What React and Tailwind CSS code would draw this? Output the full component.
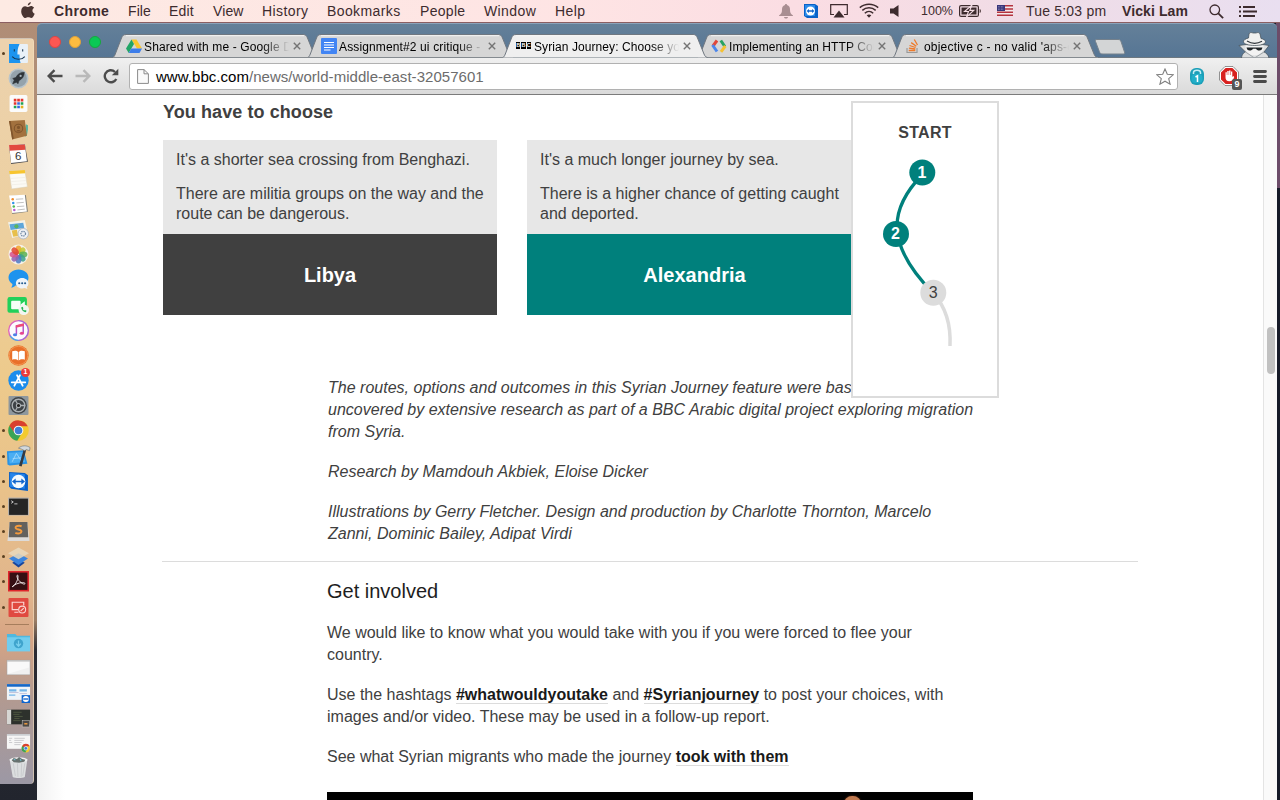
import React from "react";

const dockApps = [
  { name: "finder", run: true, art: (
    <>
      <rect x="1" y="1" width="18" height="18" rx="1" fill="#e9f1f8" />
      <path d="M1 1h10c-2 4-2 7-2 10h2c0 3 0 5 1 8H1z" fill="#1c94ef" />
      <path d="M4 13c3 3.400 9 3.400 12 0M6 6v2M14 6v2" stroke="#17344f" strokeWidth="1" fill="none" />
    </>
  ) },
  { name: "launchpad", art: (
    <>
      <circle cx="10" cy="10" r="9.500" fill="#b9c4ca" />
      <circle cx="10" cy="10" r="8" fill="#95a3ac" />
      <path d="M15.500 4c-4 0-6.500 2-8 5l-3 1 1.500 1.500-1.500 3.500 3.500-1.500L9.500 15l1-3c3-1.500 5-4 5-8z" fill="#2e3439" stroke="#2e3439" strokeWidth=".6" />
      <circle cx="12" cy="7.500" r="1.100" fill="#a8b4bb" />
    </>
  ) },
  { name: "grid", art: (
    <>
      <rect x="1.500" y="2" width="17" height="16" rx="1.500" fill="#fbfbfb" />
      <path d="M5.500 5.500h2.500v2.500H5.500zM8.800 5.500h2.500v2.500H8.800zM12.100 5.500h2.500v2.500h-2.500zM5.500 8.800h2.500v2.500H5.500z" fill="#e5352b" />
      <path d="M8.800 8.800h2.500v2.500H8.800zM8.800 12.100h2.500v2.500H8.800z" fill="#3468e0" />
      <path d="M12.100 8.800h2.500v2.500h-2.500zM5.500 12.100h2.500v2.500H5.500z" fill="#20a353" />
      <path d="M12.100 12.100h2.500v2.500h-2.500z" fill="#e4b020" />
    </>
  ) },
  { name: "contacts", art: (
    <>
      <path d="M17 5l2 1v4l-1 6-2 1z" fill="#58b5a1" />
      <path d="M1 2l15-1 2 15-14 3.500z" fill="#a2713e" />
      <path d="M1 2l1.500-.1 3 17-1.500.6z" fill="#80552c" />
      <circle cx="10" cy="9" r="4" fill="none" stroke="#80552c" />
      <path d="M8.500 8a1.500 1.500 0 003 0 1.500 1.500 0 00-3 0M7.500 12c1-2 4-2 5 0" fill="#80552c" />
    </>
  ) },
  { name: "calendar", art: (
    <>
      <path d="M1 2l15-2 3 17-16 2z" fill="#4b4b50" />
      <path d="M1 1l15-.5 2 16-15 1.500z" fill="#fff" />
      <path d="M1 1l15-.5.600 5L1.600 6.500z" fill="#e2493f" />
      <text x="9.800" y="15.300" fontSize="11" textAnchor="middle" fill="#333" className="font-['Liberation_Sans',sans-serif]">6</text>
    </>
  ) },
  { name: "notes", art: (
    <>
      <path d="M1 2l15-1 2.500 16-15 2z" fill="#fbfaf5" stroke="#d8cfb8" strokeWidth=".5" />
      <path d="M1 2l15-1 .5 3L1.500 5z" fill="#f7c52f" />
      <path d="M2.500 9l14-1M3 12l14-1M3.500 15l14-1" stroke="#eeebe2" strokeWidth=".6" />
    </>
  ) },
  { name: "reminders", art: (
    <>
      <path d="M2 2l15-1 2 16-15 2z" fill="#85837d" />
      <path d="M1 1.500l15-.8 2 16-14 1.500z" fill="#fff" />
      <circle cx="4.500" cy="5" r="1.200" fill="#f08b2d" /><circle cx="5" cy="8.500" r="1.200" fill="#2e93ea" />
      <circle cx="5.500" cy="12" r="1.200" fill="#4cba56" /><circle cx="6" cy="15.300" r="1.200" fill="#b45bd0" />
      <path d="M7.500 5l7-.4M8 8.500l7-.5M8.500 12l7-.5M9 15.200l7-.8" stroke="#aaa" strokeWidth=".7" />
    </>
  ) },
  { name: "preview", art: (
    <>
      <path d="M0 3l16-2 3 13-15 4z" fill="#f4f1e6" />
      <path d="M1.500 5l13-1.500 1 5-13 2z" fill="#5ea6da" />
      <path d="M3.500 11l5-.8 1 6-4.500.8z" fill="#e8bf4b" />
      <circle cx="8" cy="7" r="2" fill="#5bb45f" />
      <circle cx="14.500" cy="14" r="5" fill="#eef1f5" stroke="#a3adba" strokeWidth=".7" />
      <circle cx="14.500" cy="14" r="2.200" fill="none" stroke="#6f87a3" strokeWidth="1.200" strokeDasharray="1.200 .7" />
    </>
  ) },
  { name: "photos", art: (
    <>
      <circle cx="10" cy="10" r="9.500" fill="#f5f1e9" />
      <g fillOpacity=".85">
        <ellipse cx="10" cy="5.500" rx="2.800" ry="4" fill="#f3a32a" />
        <ellipse cx="10" cy="5.500" rx="2.800" ry="4" fill="#c5c82f" transform="rotate(45 10 10)" />
        <ellipse cx="10" cy="5.500" rx="2.800" ry="4" fill="#59b055" transform="rotate(90 10 10)" />
        <ellipse cx="10" cy="5.500" rx="2.800" ry="4" fill="#3aa08c" transform="rotate(135 10 10)" />
        <ellipse cx="10" cy="5.500" rx="2.800" ry="4" fill="#4b79c4" transform="rotate(180 10 10)" />
        <ellipse cx="10" cy="5.500" rx="2.800" ry="4" fill="#9160b0" transform="rotate(225 10 10)" />
        <ellipse cx="10" cy="5.500" rx="2.800" ry="4" fill="#d8528b" transform="rotate(270 10 10)" />
        <ellipse cx="10" cy="5.500" rx="2.800" ry="4" fill="#e0452f" transform="rotate(315 10 10)" />
      </g>
    </>
  ) },
  { name: "messages", art: (
    <>
      <path d="M10 .5c5.500 0 9.500 3.500 9.500 7.800S15.500 16 10 16c-1 0-2-.1-3-.4-1 1.400-2.500 2-4 2 .8-1 1.300-2 1.200-3.400C2 12.800.5 10.700.5 8.300.5 4 4.500.5 10 .5z" fill="#1d93ee" />
      <path d="M13.500 8.500c3.400 0 6 2.200 6 5 0 1.500-.6 2.700-1.700 3.600l.7 2-2.600-1c-.8.300-1.600.4-2.400.4-3.400 0-6-2.200-6-5s2.600-5 6-5z" fill="#eef4f8" />
      <circle cx="10.700" cy="13.500" r="1" fill="#275f91" /><circle cx="13.500" cy="13.500" r="1" fill="#275f91" /><circle cx="16.300" cy="13.500" r="1" fill="#275f91" />
    </>
  ) },
  { name: "facetime", art: (
    <>
      <rect x="-.5" y="2" width="18.500" height="15" rx="2" fill="#22d05a" />
      <rect x="3" y="5.500" width="9" height="8" rx="1" fill="#f6fff8" /><path d="M12 9l4-3v7l-4-2.500z" fill="#f6fff8" />
      <circle cx="15" cy="14" r="5" fill="#f1f6f2" />
      <path d="M12.500 12c.5 2.500 2 4 4.500 4.500l.7-1.500-1.600-.8-.8.600-1.200-1.300.6-.9-.8-1.500z" fill="#22b552" />
    </>
  ) },
  { name: "itunes", art: (
    <>
      <circle cx="10" cy="10" r="10" fill="#dd62bd" />
      <path d="M10 0a10 10 0 010 20" fill="#a46bd6" /><path d="M1.300 15A10 10 0 0010 20l0-5z" fill="#4da3e8" />
      <circle cx="10" cy="10" r="8.700" fill="#fcfbfd" />
      <path d="M8 13.500V5.800l6.500-1.500v8" fill="none" stroke="#b552c8" strokeWidth="1.400" />
      <ellipse cx="6.700" cy="14" rx="2" ry="1.500" fill="#4b80e6" /><ellipse cx="13.200" cy="12.600" rx="2" ry="1.500" fill="#e6478f" />
      <path d="M7.400 5l7.800-1.800v2.400L7.400 7.400z" fill="#ee4a78" />
    </>
  ) },
  { name: "ibooks", art: (
    <>
      <circle cx="10" cy="10" r="9.700" fill="#e9702a" />
      <circle cx="10" cy="10" r="8.800" fill="none" stroke="#f5a25e" strokeWidth=".7" />
      <path d="M4 6c2.500-1 4.500-.6 5.700.6v8.200C8.500 13.700 6.500 13.300 4 14zM16 6c-2.500-1-4.500-.6-5.700.6v8.200c1.200-1.100 3.200-1.500 5.700-.8z" fill="#fff" />
    </>
  ) },
  { name: "appstore", badge: "1", art: (
    <>
      <circle cx="10" cy="10" r="9.700" fill="#1b8cec" />
      <path d="M6 15l5.400-10M14 15L8.600 5M3.500 11.700h13" stroke="#fff" strokeWidth="1.600" strokeLinecap="round" />
    </>
  ) },
  { name: "settings", art: (
    <>
      <rect x=".5" y="1" width="19" height="18" rx="1" fill="#8e979d" />
      <circle cx="10" cy="10" r="8" fill="#3e4347" />
      <circle cx="10" cy="10" r="6" fill="none" stroke="#abb0b3" strokeWidth="1.300" />
      <circle cx="10" cy="10" r="2" fill="#222" stroke="#abb0b3" />
      <path d="M12 10h4.500M9 11.700L6.700 15.500M9 8.300L6.700 4.500" stroke="#abb0b3" strokeWidth="1.200" />
    </>
  ) },
  { name: "chrome", run: true, art: (
    <>
      <circle cx="10" cy="10" r="9.800" fill="#f3ca2f" />
      <path d="M1.300 5.500A9.800 9.800 0 0118.800 6H10l-4.500 6.500z" fill="#d9402f" />
      <path d="M1.300 5.500a9.800 9.800 0 007.500 14.200L13.500 12 6 12z" fill="#3aa457" />
      <circle cx="10" cy="10" r="4.600" fill="#f6f6f6" /><circle cx="10" cy="10" r="3.600" fill="#3f7ed6" />
    </>
  ) },
  { name: "xcode", run: true, art: (
    <>
      <path d="M-1 5l16-1 3.500 13-17 1.500-2-1z" fill="#2a93e4" />
      <path d="M.5 6.500l14-.8 2 9.500-15 1.500z" fill="#4aaef3" />
      <path d="M4 15l4-8 4.500 7M4.500 12l8-.8" stroke="#a6dafa" strokeWidth=".8" fill="none" />
      <path d="M17.500 3L13 19.500l-2.500-.7L15 3z" fill="#333a42" />
      <path d="M10 2C13-.8 18-.8 21 1.500L20.500 4.500l-3-1.100-1.500 1.200-3-1.600z" fill="#d3d8dc" stroke="#59616a" strokeWidth=".5" />
    </>
  ) },
  { name: "teamviewer", run: true, art: (
    <>
      <path d="M1 1l15 1 3 2v15l-16-2-2-2z" fill="#0960c8" />
      <path d="M2 2l14 1v14l-14-2z" fill="#2785ea" />
      <circle cx="10" cy="10" r="6.500" fill="#f5fafe" />
      <path d="M3.800 10l3.500-2.800v2h5.400v-2l3.500 2.800-3.500 2.800v-2H7.300v2z" fill="#1266cc" />
    </>
  ) },
  { name: "terminal", run: true, art: (
    <>
      <rect x="0" y="1.500" width="20" height="17" rx="1" fill="#b4b0ab" />
      <rect x="1" y="2.500" width="18" height="15.500" fill="#252525" />
      <path d="M3 4.500l2 1.200L3 7M6 7.500h3" stroke="#ddd" fill="none" strokeWidth=".8" />
    </>
  ) },
  { name: "sublime", run: true, art: (
    <>
      <path d="M1.500 1h17L20.500 19H-.5z" fill="#dddbd9" />
      <path d="M1.500 1h17l.8 14.500H.7z" fill="#63615d" />
      <path d="M13 5C10 4 7 5 7.300 6.600c.5 1.800 5.500 1.300 5.500 3.500 0 1.800-3.300 2.300-5.800 1.200" stroke="#f39a3d" strokeWidth="1.900" fill="none" />
    </>
  ) },
  { name: "layers", run: true, art: (
    <>
      <path d="M4 16l6-3.500 6 3.500-6 4.500z" fill="#19459b" />
      <path d="M1 12L10 7l9 5-9 6z" fill="#3b84dd" />
      <path d="M0 7l10-5.500L20 7l-10 5.500z" fill="#e9d9bd" fillOpacity=".85" />
    </>
  ) },
  { name: "acrobat", run: true, art: (
    <>
      <rect x="0" y="0" width="20" height="19.500" fill="#e0262c" />
      <rect x="1.500" y="1.500" width="17" height="16.500" fill="#351012" />
      <path d="M4 15c2-.5 6-6 5.500-10.500C9.400 3.500 8.300 4 8.500 5c.6 4 5 7.500 7 7.500 1.500-.2.500-1.500-1.500-1.500-3.500 0-8.500 2-10 4z" stroke="#efe8e8" strokeWidth=".9" fill="none" />
    </>
  ) },
  { name: "remote", run: true, art: (
    <>
      <rect x=".5" y="1" width="19" height="18" rx="1" fill="#e04a40" />
      <path d="M10 12H4V5h11v3M6 14.500h4" stroke="#fbd8d4" strokeWidth="1.100" fill="none" />
      <circle cx="13.500" cy="12" r="3.300" stroke="#fbd8d4" fill="#e04a40" /><path d="M12 13.500l3-3" stroke="#fbd8d4" />
    </>
  ) },
];

const dockFiles = [
  { name: "downloads", art: (
    <>
      <path d="M-1 2h8l1.500 1.500H21V18H-1z" fill="#4fb8df" /><path d="M-1 5h22v13.500H-1z" fill="#72cdee" />
      <circle cx="10" cy="11" r="4.500" fill="#3fa4cd" /><path d="M10 8v5M7.800 11l2.200 2.500 2.200-2.500" stroke="#79d0ee" fill="none" strokeWidth="1.200" />
    </>
  ) },
  { name: "blank-window", art: (
    <><rect x="-1" y="3" width="22" height="14" fill="#f0f0f0" stroke="#999" strokeWidth=".4" /><path d="M0 4h20v6L0 16z" fill="#f9f9f9" /><path d="M-1 3.800h22" stroke="#bbb" /></>
  ) },
  { name: "meeting-window", art: (
    <>
      <rect x="-1" y="2" width="22" height="15" fill="#eff4f8" /><path d="M-1 2h22v2.500H-1z" fill="#1467c7" />
      <path d="M1 7h7v2H1zM1 12h6v1H1zM11 7h7v2h-7z" fill="#75b6e8" /><path d="M1 10h9M11 11h7" stroke="#aac" strokeWidth=".6" />
      <rect x="13" y="12.500" width="8" height="7.500" fill="#0d65cf" /><circle cx="17" cy="16.200" r="2.900" fill="#fff" /><path d="M14.500 16.200h5" stroke="#1266cc" strokeWidth="1.300" />
    </>
  ) },
  { name: "editor-window", art: (
    <>
      <rect x="-1" y="2.500" width="22" height="14" fill="#2d312c" /><path d="M-1 2.500h4v14h-4z" fill="#d6d6d3" />
      <path d="M5 5h8M5 7h6M6 9h8M6 11h5M5 13h7" stroke="#5f6b4b" strokeWidth=".6" />
      <rect x="13.500" y="13" width="7" height="6" fill="#4c4946" stroke="#c9c6c2" strokeWidth=".5" /><path d="M15.500 16h3" stroke="#ee9c40" strokeWidth="1.400" />
    </>
  ) },
  { name: "browser-window", art: (
    <>
      <rect x="-1" y="2" width="22" height="14" fill="#f6f6f6" /><path d="M-1 2h22v1.500H-1z" fill="#c8ccd0" />
      <path d="M1 6h3M1 8h2M1 10h3M6 6h10M6 8h9M6 10h7M6 12h6" stroke="#bdbdc2" strokeWidth=".7" />
      <circle cx="17" cy="15.500" r="4" fill="#f3ca2f" /><path d="M13.400 13.500a4 4 0 017.300 0H17l-2 3z" fill="#d9402f" /><path d="M13.400 13.500A4 4 0 0016.500 19.500l2-3.500z" fill="#3aa457" /><circle cx="17" cy="15.500" r="1.700" fill="#3f7ed6" stroke="#fff" strokeWidth=".6" />
    </>
  ) },
  { name: "trash", art: (
    <>
      <path d="M1.500 2h17l-2.500 17c-2.500 1.300-9 1.300-11.500 0z" fill="#dcdedf" />
      <path d="M5 6l2 12M9 6l.5 13M13 6l-.5 13M16 6l-2 12" stroke="#c3c6c8" strokeWidth=".7" />
      <ellipse cx="10" cy="2.800" rx="8.500" ry="2.600" fill="#f0f1f2" /><path d="M3.500 3l2-2 3 1 2-2 3 2 3 .5-1 2-5 1-5-.5z" fill="#68726f" />
      <path d="M5.500 2L7 3M11.500 2l1 1.500" stroke="#6fc1d4" />
    </>
  ) },
];

function DockItem({ item }) {
  return (
    <div className="flex h-[25.170px] w-[37px] shrink-0 items-center">
      <span className={"ml-[2px] h-[3px] w-[3px] rounded-full " + (item.run ? "bg-[#5a4021]" : "bg-transparent")} />
      <div className="relative ml-[3px] h-[21px] w-[21px]">
        <svg viewBox="0 0 20 20" className="h-[21px] w-[21px] overflow-visible">{item.art}</svg>
        {item.badge && (
          <span className="absolute -top-[2px] left-[13px] flex h-[9px] w-[9px] items-center justify-center rounded-full bg-[#ee3b3a] text-[7px] font-bold text-white">{item.badge}</span>
        )}
      </div>
    </div>
  );
}

function Dock() {
  return (
    <div className="flex w-[37px] shrink-0 flex-col pt-[15px]">
      <div className="flex h-[746px] w-[34px] flex-col rounded-r-[4px] border-t border-r border-[#f3dfc0]/60 bg-[linear-gradient(#ecd2ae_0%,#edd0a0_25%,#edca8c_45%,#e9c28a_60%,#e0b48c_75%,#d8a584_80%,#b39a90_88%,#9c98a5_100%)] pt-[2px]">
        {dockApps.map((a) => <DockItem key={a.name} item={a} />)}
        <div className="flex h-[10px] items-center pl-[5px]"><div className="h-px w-[24px] bg-[#a67d5c]" /></div>
        {dockFiles.map((a) => <DockItem key={a.name} item={a} />)}
      </div>
    </div>
  );
}

function MenuBar() {
  return (
    <div className="flex h-[22px] shrink-0 items-center bg-[linear-gradient(90deg,#fdeae3_0%,#fee4e4_45%,#fbdde3_62%,#f0dce6_80%,#e9dff0_100%)] text-[14px] text-[#3d2b2e]">
      <svg viewBox="0 0 14 16" className="ml-[21px] h-[16px] w-[14px] -translate-y-px">
        <path d="M9.800 0c.1 1.800-1.300 3.400-3 3.400C6.600 1.700 8.200.2 9.800 0zM10 4c.9 0 2.300.5 3.100 1.700-2.500 1.600-2 5 .6 6C12.900 13.800 11.600 16 10.200 16c-1.100 0-1.600-.7-2.900-.7-1.400 0-1.900.7-2.900.7C2.400 16 .2 12.400.2 9.200.2 5.900 2.200 4.200 4.200 4.200c1.200 0 2.300.8 3 .8S8.700 4 10 4z" fill="#4a3532" />
      </svg>
      <span className="ml-[19px] w-[74px] font-bold tracking-[0.4px]">Chrome</span>
      <span className="w-[41px] tracking-[0.1px]">File</span>
      <span className="w-[44px] tracking-[0.2px]">Edit</span>
      <span className="w-[49px] tracking-[0.1px]">View</span>
      <span className="w-[65px] tracking-[0.4px]">History</span>
      <span className="w-[93px] tracking-[0.4px]">Bookmarks</span>
      <span className="w-[64px] tracking-[0.3px]">People</span>
      <span className="w-[71px] tracking-[0.4px]">Window</span>
      <span className="w-[223px] tracking-[0.400px]">Help</span>
      <svg viewBox="0 0 14 15" className="ml-px h-[15px] w-[14px]"><path d="M7 0c.8 0 1 .5 1 1 2.300.5 3 2.500 3 4.500 0 3 .5 4.500 3 6V12H0v-.5c2.500-1.500 3-3 3-6C3 3.500 3.700 1.500 6 1c0-.5.2-1 1-1zM5 13h4c-.3 2-3.700 2-4 0z" fill="#a98e92" /></svg>
      <svg viewBox="0 0 14 16" className="ml-[11px] h-[16px] w-[14px]"><path d="M0 1h11l3 2v12H3l-3-2z" fill="#0a62c8" /><path d="M1 2h10v11H1z" fill="#2c8bea" /><circle cx="6.500" cy="8" r="4.500" fill="#fff" /><path d="M2.500 8L5 6v1.300h3V6l2.500 2L8 10V8.700H5V10z" fill="#1266cc" /></svg>
      <svg viewBox="0 0 18 14" className="ml-[12px] h-[14px] w-[18px]"><path d="M4 10.500H.7V.7h16.600v9.800H14" fill="none" stroke="#3d2b2e" strokeWidth="1.200" /><path d="M9 6.500l5.500 7h-11z" fill="#3d2b2e" /></svg>
      <svg viewBox="0 0 20 15" className="ml-[11px] h-[15px] w-[20px] -translate-y-px"><g fill="none" stroke="#3d2b2e" strokeWidth="1.500"><path d="M.8 4.600c5.300-4.600 13.100-4.600 18.400 0M3.300 7.400c3.900-3.500 9.500-3.500 13.400 0M5.800 10.200c2.400-2.200 6-2.200 8.400 0" /></g><path d="M7.700 12.300c1.300-1.100 3.300-1.100 4.600 0L10 14.800z" fill="#3d2b2e" /></svg>
      <svg viewBox="0 0 9 12" className="ml-[11px] h-[12px] w-[9px]"><path d="M0 3.500h3.500L8.500 0v12l-5-3.500H0z" fill="#3d2b2e" /></svg>
      <span className="ml-[22px] w-[38px] text-[12.500px]">100%</span>
      <svg viewBox="0 0 23 12" className="h-[12px] w-[23px]"><rect x=".6" y=".6" width="18.800" height="10.800" rx="1.500" fill="none" stroke="#3d2b2e" strokeWidth="1.200" /><rect x="2.500" y="2.500" width="15" height="7" fill="#3d2b2e" /><path d="M20.700 4c1.500.4 1.500 3.600 0 4z" fill="#3d2b2e" /><path d="M13 0L5.500 6.500h4L7.500 12l7.300-6.600h-4z" fill="#3d2b2e" stroke="#f3dce4" strokeWidth="1.100" /></svg>
      <svg viewBox="0 0 16 11" className="ml-[15px] h-[11px] w-[16px] -translate-y-px"><path d="M0 0h16v11H0z" fill="#f4e9ec" /><path d="M0 .8h16M0 4h16M0 7.200h16M0 10.300h16" stroke="#b4333e" strokeWidth="1.500" /><path d="M0 0h8v6H0z" fill="#38357a" /><path d="M1 1.500h6M1 3h6M1 4.500h6" stroke="#b9b5d8" strokeWidth=".6" strokeDasharray=".7 .8" /></svg>
      <span className="ml-[13px] w-[96px] whitespace-nowrap tracking-[0.2px]">Tue 5:03 pm</span>
      <span className="w-[87px] whitespace-nowrap font-bold tracking-[0.1px]">Vicki Lam</span>
      <svg viewBox="0 0 15 15" className="h-[15px] w-[15px]"><circle cx="5.800" cy="5.800" r="4.800" fill="none" stroke="#3d2b2e" strokeWidth="1.300" /><path d="M9.300 9.300l4.800 4.800" stroke="#3d2b2e" strokeWidth="1.800" /></svg>
      <svg viewBox="0 0 18 11" className="ml-[15px] h-[11px] w-[18px]"><path d="M0 1h2M0 5.500h2M0 10h2M4 1h12M4 5.500h14M4 10h12" stroke="#3d2b2e" strokeWidth="1.800" /></svg>
    </div>
  );
}

function Tab({ active, icon, title, last, titleClass }) {
  return (
    <div className={"relative flex h-[24px] w-[205px] shrink-0 items-center pl-[13px] " + (last ? "" : "-mr-[10px] ") + (active ? "z-10" : "")}>
      <svg viewBox="0 0 205 24" className="absolute inset-0 h-[24px] w-[205px]">
        <path d="M-.5 23.500C1 23 1.500 22 2.300 20L8.500 4C9.500 1.500 10.500.5 13 .5H190c2.500 0 3.500 1 4.500 3.500L201 20c.8 2 1.500 3 3.500 3.500" fill={active ? "#efefef" : "#d6d6d6"} stroke="#6f7780" strokeWidth="1" />
        {!active && <path d="M0 23.500h205" stroke="#858b90" />}
        <path d="M13 1.700h178" stroke="#f6f6f6" strokeWidth="1" />
      </svg>
      <div className="relative h-[16px] w-[16px] shrink-0">{icon}</div>
      <span className={"relative top-px ml-[2px] w-[145px] overflow-hidden whitespace-nowrap text-[12px] text-black [mask-image:linear-gradient(90deg,#000_118px,transparent_145px)] " + titleClass}>{title}</span>
      <svg viewBox="0 0 8 8" className="relative ml-[4px] h-[8px] w-[8px]"><path d="M.8.8l6.400 6.400M7.200.8L.8 7.200" stroke="#747474" strokeWidth="1.400" /></svg>
    </div>
  );
}

const favs = {
  drive: <svg viewBox="0 0 16 16" className="h-[16px] w-[16px]"><path d="M5.500 1.500h5L16 10.500h-5z" fill="#f9c62f" /><path d="M5.500 1.500L8 6 2.700 15 0 10.500z" fill="#22a565" /><path d="M5.300 10.500H16L13.500 15H2.700z" fill="#3d7dea" /></svg>,
  docs: <svg viewBox="0 0 16 16" className="h-[16px] w-[16px]"><rect width="16" height="16" rx="1" fill="#4285f4" /><path d="M3 4.500h10M3 7h10M3 9.500h10M3 12h6.500" stroke="#fff" strokeWidth="1.100" /></svg>,
  bbc: <div className="mt-[4px] flex h-[7px] w-[15px] gap-px text-[5.500px] leading-[7px] font-bold text-white"><span className="flex w-[4.400px] justify-center bg-black">B</span><span className="flex w-[4.400px] justify-center bg-black">B</span><span className="flex w-[4.400px] justify-center bg-black">C</span></div>,
  dev: <svg viewBox="0 0 16 16" className="h-[16px] w-[16px]" fill="none" strokeWidth="3"><path d="M6 2.500L2 8" stroke="#e0473a" /><path d="M1.500 7l4.500 6.500" stroke="#4a86ec" /><path d="M9.800 2.500L13.800 8.500" stroke="#27a262" /><path d="M14.300 8l-4.300 5.800" stroke="#f5c132" /></svg>,
  so: <svg viewBox="0 0 16 16" className="h-[16px] w-[16px]" fill="none"><path d="M1 10v4.500h10V10" stroke="#9a9a9a" strokeWidth="1.200" /><path d="M2.700 12.500h6.600M2.900 10.200l6.400.8M3.500 7.500l6.100 2M5.200 4.600l5.100 3.700M8.300 1.500l3.200 5.500" stroke="#ee7a2a" strokeWidth="1.300" /></svg>,
};

function TabStrip() {
  return (
    <div className="flex h-[35px] shrink-0 rounded-t-[5px] border-t border-[#8aa3ba] bg-[linear-gradient(#648099,#567594)] pl-[12px] shadow-[inset_0_-1px_0_#6d7881]">
      <div className="flex h-[35px] w-[64px] items-center gap-[8px]">
        <span className="h-[12px] w-[12px] rounded-full border border-[#dc4644] bg-[#fc5753]" />
        <span className="h-[12px] w-[12px] rounded-full border border-[#dfa23a] bg-[#fdbc40]" />
        <span className="h-[12px] w-[12px] rounded-full border border-[#16a83e] bg-[#0ac855]" />
      </div>
      <div className="flex pt-[10px]">
        <Tab icon={favs.drive} title="Shared with me - Google Drive" titleClass="tracking-[0.130px]" />
        <Tab icon={favs.docs} title="Assignment#2 ui critique - Google" titleClass="tracking-[0.130px]" />
        <Tab active icon={favs.bbc} title="Syrian Journey: Choose your own" titleClass="tracking-[0.080px]" />
        <Tab icon={favs.dev} title="Implementing an HTTP Connection" titleClass="tracking-[0.080px]" />
        <Tab last icon={favs.so} title="objective c - no valid 'aps-environment" titleClass="tracking-[0.200px]" />
        <svg viewBox="0 0 32 16" className="-ml-[4px] mt-[5px] h-[16px] w-[32px]"><path d="M3 .5h21c2 0 2.500.6 3.200 2.500L30.500 13c.5 1.500 0 2-1.500 2H9C7 15 6 14.500 5.300 12.500L1.500 2.500C1 1 1.500.5 3 .5z" fill="#d3d5d6" stroke="#75818c" /></svg>
      </div>
      <svg viewBox="0 0 32 26" className="mt-[8px] ml-auto mr-[7px] h-[26px] w-[32px]">
        <path d="M3.500 26C4 22 6 20.500 7.500 20L1 13.500 8 12.500h17l6 1L26 20c2 .8 4.500 3 5 6z" fill="#dddfe0" stroke="#3f4a53" strokeWidth=".7" />
        <path d="M7.500 14h18v3.500c-1 3-5 6-9 6s-8-3-9-6z" fill="#f3f3f3" />
        <path d="M10.500 6L11 2C11.500.3 13.500.3 15 1h3c1.500-.7 3.500-.7 4 1l1 4.500c2.500.6 4.500 1.700 4.500 3.200 0 2.300-5 3.800-10.800 3.800S5.500 12 5.500 9.700c0-1.700 2-3 5-3.700z" fill="#f0f0ef" stroke="#3f4a53" strokeWidth=".7" />
        <path d="M9 9c4.500 2.800 10.500 2.800 15 .3" stroke="#2e3439" strokeWidth="1.100" fill="none" />
        <path d="M8.500 15.500h16l-.7 2c-1.700 1.600-4.800 1.300-5.800-.8h-3c-1 2.100-4.300 2.400-5.800.8z" fill="#1f2427" />
        <path d="M7.500 20l9 6 9.500-6" stroke="#9da3a7" strokeWidth="1" fill="none" />
      </svg>
    </div>
  );
}

function Toolbar() {
  return (
    <div className="flex h-[37px] shrink-0 items-center border-b border-[#7b7b7b] bg-[linear-gradient(#f0f0f0,#dadada)]">
      <svg viewBox="0 0 16 14" className="ml-[10px] h-[14px] w-[16px]" fill="none" stroke="#4c4c4c" strokeWidth="2.400"><path d="M15.500 7H2M7.500 1.200L1.700 7l5.800 5.800" /></svg>
      <svg viewBox="0 0 16 14" className="ml-[12px] h-[14px] w-[16px]" fill="none" stroke="#b9b9b9" strokeWidth="2.400"><path d="M.5 7H14M8.500 1.200L14.300 7l-5.800 5.800" /></svg>
      <svg viewBox="0 0 16 16" className="ml-[12px] h-[16px] w-[16px]"><path d="M13.300 11A6 6 0 112.500 5.300 6 6 0 0112 4" fill="none" stroke="#4c4c4c" strokeWidth="2.400" /><path d="M15.300.8v6.500H8.800z" fill="#4c4c4c" /></svg>
      <div className="ml-[10px] flex h-[27px] w-[1049px] items-center rounded-[3px] border border-[#b1b1b1] bg-white pl-[7px] text-[15px] text-[#6c6c6c]">
        <svg viewBox="0 0 12 15" className="h-[15px] w-[12px]"><path d="M.6.6h6.400l4.400 4.200v9.600H.6z" fill="#fafafa" stroke="#8a8a8a" /><path d="M7 .6v4.200h4.400" fill="none" stroke="#8a8a8a" /></svg>
        <span className="ml-[7px] flex-1 pt-[2px] whitespace-nowrap tracking-[0.040px]"><span className="text-black">www.bbc.com</span>/news/world-middle-east-32057601</span>
        <svg viewBox="0 0 18 17" className="mr-[3px] h-[17px] w-[18px]"><path d="M9 1l2.300 5.300 5.900.5-4.500 3.800 1.400 5.600L9 13.200l-5.100 3 1.400-5.600L.8 6.800l5.900-.5z" fill="#fff" stroke="#808080" strokeWidth="1.100" /></svg>
      </div>
      <svg viewBox="0 0 14 17" className="ml-[12px] h-[17px] w-[14px]"><rect width="14" height="17" rx="6" fill="#1c9fb8" /><path d="M3.500 6V4.500c0-3 7-3 7 0V6" stroke="#c5edf5" strokeWidth="1.500" fill="none" /><rect x="1.500" y="6" width="11" height="9" rx="4" fill="#22afc9" /><path d="M5.500 9l2-1.200V14" stroke="#fff" strokeWidth="1.500" fill="none" /></svg>
      <div className="relative ml-[15px] h-[20px] w-[20px]">
        <svg viewBox="0 0 20 20" className="h-[20px] w-[20px]"><path d="M6 .5h8L19.500 6v8L14 19.500H6L.5 14V6z" fill="#fff" stroke="#777" strokeWidth=".8" /><path d="M6.600 2h6.800L18 6.600v6.800L13.400 18H6.600L2 13.400V6.600z" fill="#d8211f" /><path d="M6.500 9.500V6.200h1.300V9h.5V5h1.400v4h.4V4.500h1.400V9h.5V5.500h1.300V11l1-1 .9.900c-1 3-2.300 4.300-4.700 4.300-2.800 0-4-1.500-4-4z" fill="#fff" /></svg>
        <span className="absolute top-[13px] left-[13px] flex h-[11px] w-[10px] items-center justify-center rounded-[2px] bg-[#555] text-[9px] font-bold text-white">9</span>
      </div>
      <svg viewBox="0 0 14 13" className="ml-[14px] h-[13px] w-[14px]"><path d="M1.500 1.500h11M1.500 6.500h11M1.500 11.500h11" stroke="#4a4a4a" strokeWidth="2.800" strokeLinecap="round" /></svg>
    </div>
  );
}

function Choice({ lines, label, buttonClass }) {
  return (
    <div className="w-[334px] shrink-0">
      <div className="h-[94px] bg-[#e7e7e7] pt-[10px] pl-[13px] text-[16px] leading-[20px] text-[#404040]">
        <p className="whitespace-nowrap">{lines[0]}</p>
        <p className="mt-[14px] whitespace-nowrap">{lines[1]}<br />{lines[2]}</p>
      </div>
      <div className={"flex h-[81px] items-center justify-center text-[20px] font-bold text-white " + buttonClass}>{label}</div>
    </div>
  );
}

function RoutePanel() {
  return (
    <div className="absolute top-[6px] left-[814px] h-[297px] w-[148px] border-2 border-[#dcdcdc] bg-white text-[#404040]">
      <div className="pt-[20px] text-center text-[16px] leading-[20px] font-bold tracking-[0.300px]">START</div>
      <svg viewBox="853 103 144 293" className="absolute inset-0 h-[293px] w-[144px]">
        <path d="M922 175C888 210 886 245 933 293" fill="none" stroke="#00807c" strokeWidth="3.300" />
        <path d="M933 293C945 306 951 325 950 346" fill="none" stroke="#dcdcdc" strokeWidth="3.500" />
        <circle cx="922.300" cy="172.500" r="13" fill="#00807c" />
        <circle cx="896" cy="234" r="13" fill="#00807c" />
        <circle cx="933.300" cy="292.800" r="13" fill="#dcdcdc" />
        <g fontSize="16" textAnchor="middle" className="font-['Liberation_Sans',sans-serif]">
          <text x="922" y="178" fontWeight="bold" fill="#fff">1</text>
          <text x="895.500" y="239.300" fontWeight="bold" fill="#fff">2</text>
          <text x="933.300" y="298.300" fill="#404040">3</text>
        </g>
      </svg>
    </div>
  );
}

function Tag({ children }) {
  return <span className="border-b border-[#dcdcdc] font-bold text-[#1a1a1a]">{children}</span>;
}

function Page() {
  return (
    <div className="relative flex min-h-0 flex-1 bg-[linear-gradient(90deg,#f2f2f2,#fff_28px)]">
      <div className="flex min-w-0 flex-1 flex-col overflow-hidden pl-[126px]">
        <h2 className="mt-[6px] h-[39px] text-[18px] leading-[22px] font-bold tracking-[0.080px] text-[#404040]">You have to choose</h2>
        <div className="flex gap-[30px]">
          <Choice
            lines={["It's a shorter sea crossing from Benghazi.", "There are militia groups on the way and the", "route can be dangerous."]}
            label="Libya" buttonClass="bg-[#404040]" />
          <Choice
            lines={["It's a much longer journey by sea.", "There is a higher chance of getting caught", "and deported."]}
            label="Alexandria" buttonClass="bg-[#00807c] pl-px" />
        </div>
        <div className="mt-[62px] flex flex-col gap-[18px] pl-[165px] text-[16px] leading-[22px] tracking-[0.010px] whitespace-nowrap text-[#404040] italic">
          <p>The routes, options and outcomes in this Syrian Journey feature were based on stories<br />uncovered by extensive research as part of a BBC Arabic digital project exploring migration<br />from Syria.</p>
          <p>Research by Mamdouh Akbiek, Eloise Dicker</p>
          <p>Illustrations by Gerry Fletcher. Design and production by Charlotte Thornton, Marcelo<br />Zanni, Dominic Bailey, Adipat Virdi</p>
        </div>
        <div className="mt-[16px] -ml-px h-px w-[976px] shrink-0 bg-[#dcdcdc]" />
        <div className="flex flex-col gap-[18px] pl-[164px] text-[16px] leading-[22px] whitespace-nowrap text-[#404040]">
          <h2 className="mt-[17px] mb-px h-[24px] text-[20px] leading-[24px] text-[#1e1e1e]">Get involved</h2>
          <p>We would like to know what you would take with you if you were forced to flee your<br />country.</p>
          <p>Use the hashtags <Tag>#whatwouldyoutake</Tag> and <Tag>#Syrianjourney</Tag> to post your choices, with<br />images and/or video. These may be used in a follow-up report.</p>
          <p>See what Syrian migrants who made the journey <Tag>took with them</Tag></p>
        </div>
        <div className="mt-[24px] ml-[164px] h-[8px] w-[646px] shrink-0 overflow-hidden bg-black pl-[517px]">
          <div className="mt-[4px] h-[16px] w-[17px] rounded-full bg-[#c07a50] shadow-[0_0_2px_#7b3b1d]" />
        </div>
      </div>
      <div className="w-[14px] shrink-0 border-l border-[#e4e4e4] bg-[#fafafa] pt-[232px] pl-[3px]">
        <div className="h-[47px] w-[8px] rounded-full bg-[#c1c1c1]" />
      </div>
      <RoutePanel />
    </div>
  );
}

export default function App() {
  return (
    <div className="flex h-[800px] w-[1280px] flex-col overflow-hidden bg-[linear-gradient(90deg,transparent_1200px,#171b29_1200px),linear-gradient(#b08d76_0px,#b0927a_300px,#9d7f66_620px,#2b2b33_650px,#22252e_800px)] font-['Liberation_Sans',sans-serif]">
      <MenuBar />
      <div className="flex min-h-0 flex-1 border-t border-[#8b5f62] bg-[linear-gradient(90deg,transparent_1276px,#6c4c69_1276px)] bg-[length:100%_165px] bg-no-repeat">
        <Dock />
        <div className="flex h-[777px] w-[1240px] shrink-0 flex-col">
          <TabStrip />
          <Toolbar />
          <Page />
        </div>
      </div>
    </div>
  );
}
